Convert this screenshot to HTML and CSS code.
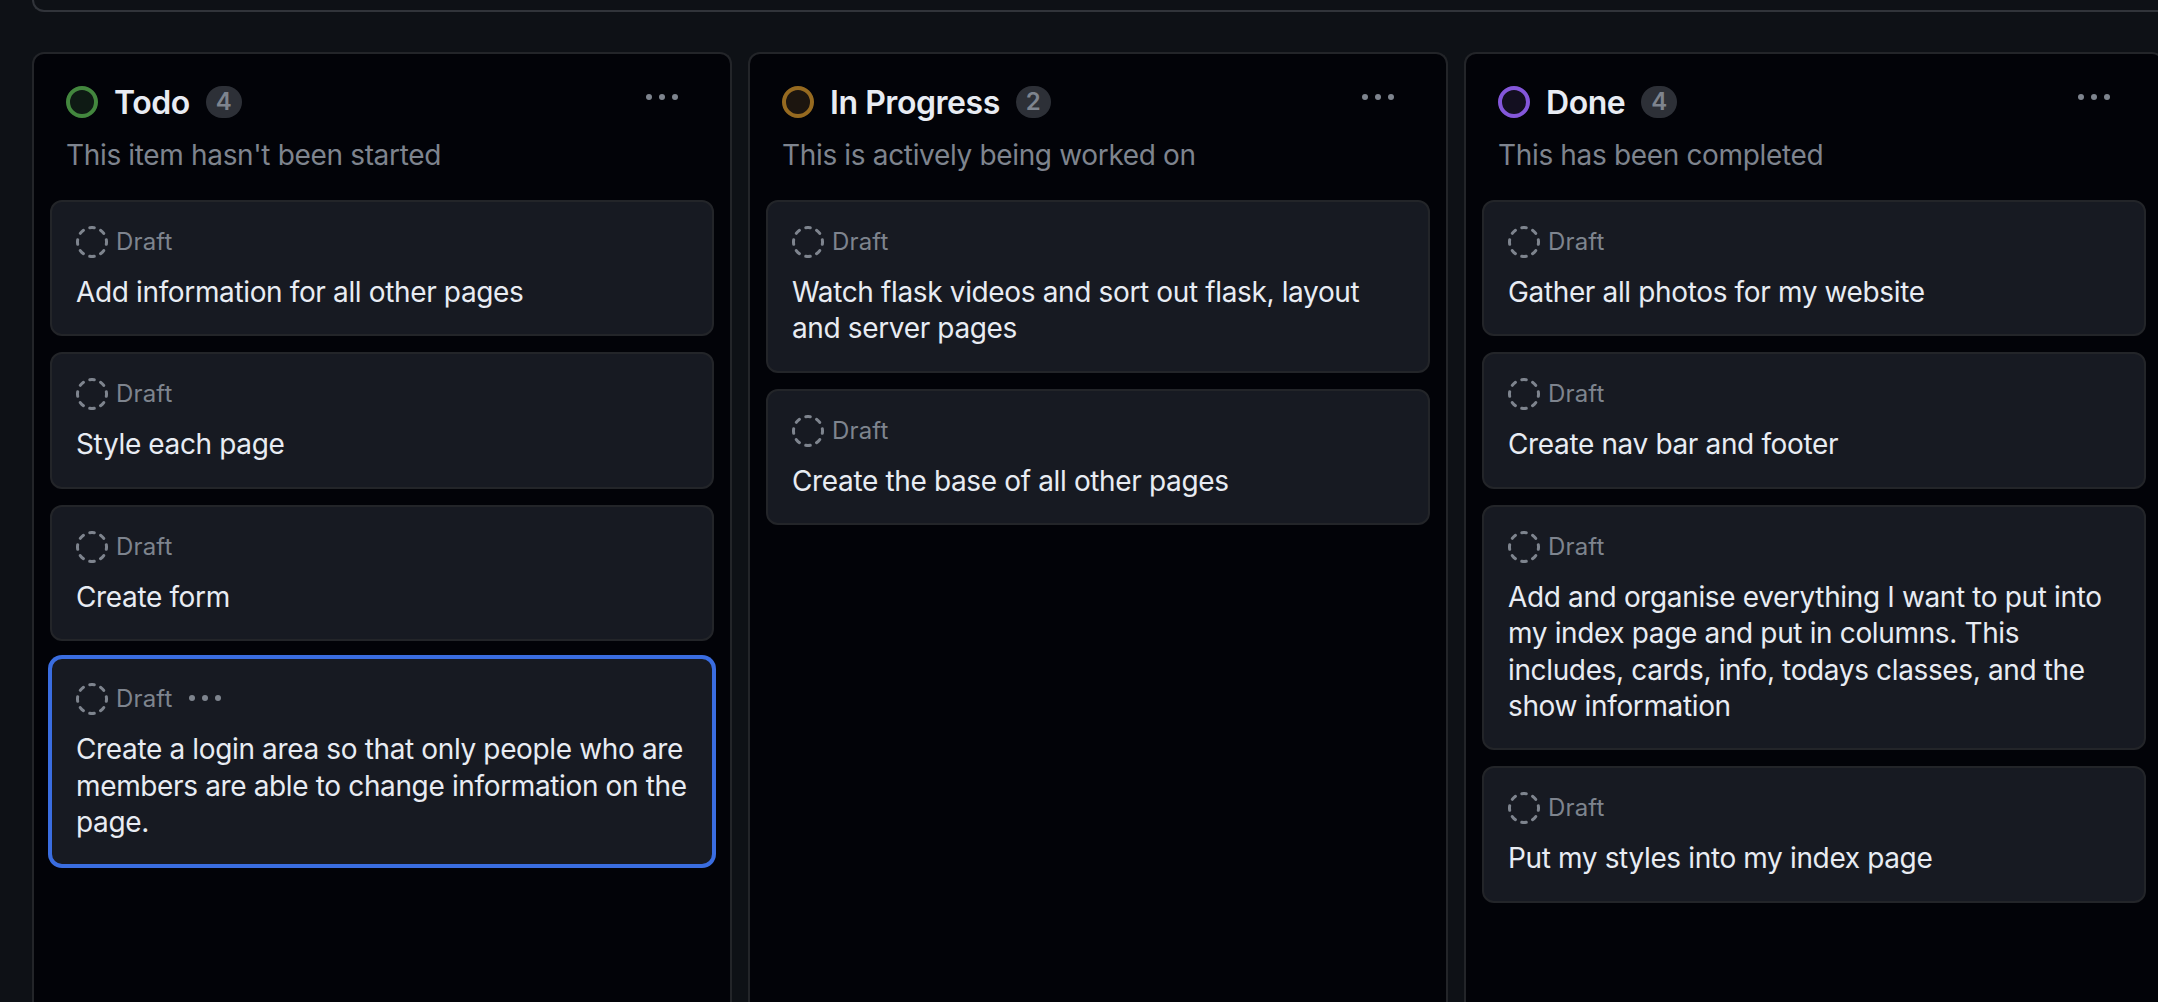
FILE: index.html
```html
<!DOCTYPE html>
<html lang="en">
<head>
<meta charset="utf-8">
<title>Project board</title>
<link rel="stylesheet" href="styles.css">
</head>
<body>
<svg class="sprite" aria-hidden="true">
  <symbol id="draft" viewBox="0 0 16 16"><path d="M14.307 11.655a.75.75 0 0 1 .165 1.048 8.05 8.05 0 0 1-1.769 1.77.75.75 0 0 1-.883-1.214 6.552 6.552 0 0 0 1.44-1.439.75.75 0 0 1 1.047-.165Zm-2.652-9.962a.75.75 0 0 1 1.048-.165 8.05 8.05 0 0 1 1.77 1.769.75.75 0 1 1-1.214.883 6.552 6.552 0 0 0-1.439-1.44.75.75 0 0 1-.165-1.047ZM6.749.097a8.075 8.075 0 0 1 2.502 0 .75.75 0 1 1-.233 1.482 6.558 6.558 0 0 0-2.036 0A.751.751 0 0 1 6.749.097ZM.955 6.125a.75.75 0 0 1 .624.857 6.558 6.558 0 0 0 0 2.036.75.75 0 1 1-1.482.233 8.075 8.075 0 0 1 0-2.502.75.75 0 0 1 .858-.624Zm14.09 0a.75.75 0 0 1 .858.624c.13.829.13 1.673 0 2.502a.75.75 0 1 1-1.482-.233 6.558 6.558 0 0 0 0-2.036.75.75 0 0 1 .624-.857Zm-8.92 8.92a.75.75 0 0 1 .857-.624 6.558 6.558 0 0 0 2.036 0 .75.75 0 1 1 .233 1.482c-.829.13-1.673.13-2.502 0a.75.75 0 0 1-.624-.858Zm-4.432-3.39a.75.75 0 0 1 1.048.165 6.552 6.552 0 0 0 1.439 1.44.751.751 0 0 1-.883 1.212 8.05 8.05 0 0 1-1.77-1.769.75.75 0 0 1 .166-1.048Zm2.652-9.962A.75.75 0 0 1 4.18 2.74a6.556 6.556 0 0 0-1.44 1.44.751.751 0 0 1-1.212-.883 8.05 8.05 0 0 1 1.769-1.77.75.75 0 0 1 1.048.165Z"/></symbol>
  <symbol id="kebab" viewBox="0 0 16 16"><circle cx="1.5" cy="8" r="1.5"/><circle cx="8" cy="8" r="1.5"/><circle cx="14.5" cy="8" r="1.5"/></symbol>
</svg>
<div class="filter-bar"></div>
<main class="board">
  <section class="column">
    <header class="column-header">
      <div class="column-heading">
        <span class="status status-todo"></span>
        <h2 class="column-title">Todo</h2>
        <span class="count">4</span>
        <svg class="icon column-menu"><use href="#kebab"/></svg>
      </div>
      <p class="column-description">This item hasn't been started</p>
    </header>
    <div class="cards">
      <article class="card">
        <div class="card-meta"><svg class="icon"><use href="#draft"/></svg><span class="card-type">Draft</span></div>
        <h3 class="card-title">Add information for all other pages</h3>
      </article>
      <article class="card">
        <div class="card-meta"><svg class="icon"><use href="#draft"/></svg><span class="card-type">Draft</span></div>
        <h3 class="card-title">Style each page</h3>
      </article>
      <article class="card">
        <div class="card-meta"><svg class="icon"><use href="#draft"/></svg><span class="card-type">Draft</span></div>
        <h3 class="card-title">Create form</h3>
      </article>
      <article class="card card-selected">
        <div class="card-meta"><svg class="icon"><use href="#draft"/></svg><span class="card-type">Draft</span><svg class="icon card-menu"><use href="#kebab"/></svg></div>
        <h3 class="card-title">Create a login area so that only people who are members are able to change information on the page.</h3>
      </article>
    </div>
  </section>
  <section class="column">
    <header class="column-header">
      <div class="column-heading">
        <span class="status status-progress"></span>
        <h2 class="column-title">In Progress</h2>
        <span class="count">2</span>
        <svg class="icon column-menu"><use href="#kebab"/></svg>
      </div>
      <p class="column-description">This is actively being worked on</p>
    </header>
    <div class="cards">
      <article class="card">
        <div class="card-meta"><svg class="icon"><use href="#draft"/></svg><span class="card-type">Draft</span></div>
        <h3 class="card-title">Watch flask videos and sort out flask, layout and server pages</h3>
      </article>
      <article class="card">
        <div class="card-meta"><svg class="icon"><use href="#draft"/></svg><span class="card-type">Draft</span></div>
        <h3 class="card-title">Create the base of all other pages</h3>
      </article>
    </div>
  </section>
  <section class="column">
    <header class="column-header">
      <div class="column-heading">
        <span class="status status-done"></span>
        <h2 class="column-title">Done</h2>
        <span class="count">4</span>
        <svg class="icon column-menu"><use href="#kebab"/></svg>
      </div>
      <p class="column-description">This has been completed</p>
    </header>
    <div class="cards">
      <article class="card">
        <div class="card-meta"><svg class="icon"><use href="#draft"/></svg><span class="card-type">Draft</span></div>
        <h3 class="card-title">Gather all photos for my website</h3>
      </article>
      <article class="card">
        <div class="card-meta"><svg class="icon"><use href="#draft"/></svg><span class="card-type">Draft</span></div>
        <h3 class="card-title">Create nav bar and footer</h3>
      </article>
      <article class="card">
        <div class="card-meta"><svg class="icon"><use href="#draft"/></svg><span class="card-type">Draft</span></div>
        <h3 class="card-title">Add and organise everything I want to put into my index page and put in columns. This includes, cards, info, todays classes, and the show information</h3>
      </article>
      <article class="card">
        <div class="card-meta"><svg class="icon"><use href="#draft"/></svg><span class="card-type">Draft</span></div>
        <h3 class="card-title">Put my styles into my index page</h3>
      </article>
    </div>
  </section>
</main>
</body>
</html>
```
FILE: styles.css
```css
:root {
  --page: #0e1116;
  --column: #020308;
  --card: #171a22;
  --border: #232529;
  --text: #e8ecf3;
  --muted: #7e848e;
}

* {
  box-sizing: border-box;
}

body {
  display: flex;
  flex-direction: column;
  height: 100vh;
  margin: 0;
  padding-left: 32px;
  overflow: hidden;
  background: var(--page);
  color: var(--text);
  font-family: Inter, "Liberation Sans", sans-serif;
}

h2,
h3,
p {
  margin: 0;
}

.sprite {
  display: none;
}

.icon {
  flex: none;
  width: 32px;
  height: 32px;
  fill: var(--muted);
}

.filter-bar {
  flex: none;
  height: 12px;
  border: solid #31343a;
  border-width: 0 0 2px 2px;
  border-bottom-left-radius: 12px;
}

.board {
  display: flex;
  flex: 1;
  gap: 16px;
  min-height: 0;
  margin-top: 40px;
}

.column {
  flex: none;
  width: 700px;
  border: 2px solid var(--border);
  border-bottom: 0;
  border-radius: 12px 12px 0 0;
  background: var(--column);
}

.column-header {
  padding: 32px 52px 24px 32px;
}

.column-heading {
  display: flex;
  align-items: center;
  gap: 16px;
  height: 32px;
}

.status {
  flex: none;
  width: 32px;
  height: 32px;
  border: 4px solid;
  border-radius: 50%;
}

.status-todo {
  border-color: #43873e;
  background: #0e1a14;
}

.status-progress {
  border-color: #966a20;
  background: #1c150f;
}

.status-done {
  border-color: #8457da;
  background: #130f20;
}

.column-title {
  padding-top: 2px;
  font-size: 32px;
  font-weight: 600;
  line-height: 40px;
  letter-spacing: -0.45px;
}

.count {
  min-width: 35px;
  padding: 0 10px;
  border-radius: 16px;
  background: #2d3037;
  color: var(--muted);
  font-size: 24px;
  font-weight: 600;
  line-height: 32px;
  text-align: center;
}

.column-menu {
  margin: -10px 0 0 auto;
}

.column-description {
  margin-top: 16px;
  color: var(--muted);
  font-size: 28px;
  line-height: 42px;
  letter-spacing: -0.34px;
}

.cards {
  display: flex;
  flex-direction: column;
  gap: 16px;
  padding: 0 16px;
}

.card {
  padding: 24px;
  border: 2px solid var(--border);
  border-radius: 12px;
  background: var(--card);
}

.card-selected {
  border-color: #3a6de0;
  box-shadow: 0 0 0 2px #3a6de0;
}

.card-meta {
  display: flex;
  align-items: center;
  gap: 8px;
  height: 32px;
  margin-bottom: 16px;
}

.card-type {
  color: var(--muted);
  font-size: 24px;
  line-height: 30px;
  letter-spacing: 0.15px;
}

.card-menu {
  margin: -2px 0 0 8px;
}

.card-title {
  font-size: 28px;
  font-weight: 400;
  line-height: 1.3;
  letter-spacing: -0.36px;
}
```
